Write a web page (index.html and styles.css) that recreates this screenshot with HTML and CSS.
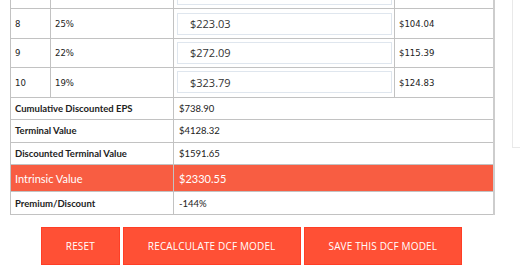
FILE: index.html
```html
<!DOCTYPE html>
<html lang="en">

<head>
    <meta charset="UTF-8">
    <meta name="viewport" content="width=device-width, initial-scale=1.0">
    <title>DCF Calculator</title>
    <link rel="stylesheet" href="styles.css">
</head>

<body>
    <div class="page">
        <main class="calc">
            <!-- Tabla de proyección (recortada arriba) -->
            <table class="dcf">
                <colgroup>
                    <col class="c-year">
                    <col class="c-growth">
                    <col class="c-eps">
                    <col class="c-disc">
                </colgroup>
                <tbody>
                    <!-- fila anterior, solo se ve el borde inferior -->
                    <tr class="year-row">
                        <td></td>
                        <td></td>
                        <td><input class="eps-input" type="text" value=""></td>
                        <td></td>
                    </tr>
                    <tr class="year-row">
                        <td>8</td>
                        <td>25%</td>
                        <td><input class="eps-input" type="text" value="$223.03"></td>
                        <td>$104.04</td>
                    </tr>
                    <tr class="year-row">
                        <td>9</td>
                        <td>22%</td>
                        <td><input class="eps-input" type="text" value="$272.09"></td>
                        <td>$115.39</td>
                    </tr>
                    <tr class="year-row">
                        <td>10</td>
                        <td>19%</td>
                        <td><input class="eps-input" type="text" value="$323.79"></td>
                        <td>$124.83</td>
                    </tr>

                    <tr class="sum-row">
                        <th colspan="2">Cumulative Discounted EPS</th>
                        <td colspan="2">$738.90</td>
                    </tr>
                    <tr class="sum-row">
                        <th colspan="2">Terminal Value</th>
                        <td colspan="2">$4128.32</td>
                    </tr>
                    <tr class="sum-row">
                        <th colspan="2">Discounted Terminal Value</th>
                        <td colspan="2">$1591.65</td>
                    </tr>
                    <tr class="sum-row intrinsic">
                        <th colspan="2">Intrinsic Value</th>
                        <td colspan="2">$2330.55</td>
                    </tr>
                    <tr class="sum-row">
                        <th colspan="2">Premium/Discount</th>
                        <td colspan="2">-144%</td>
                    </tr>
                </tbody>
            </table>

            <div class="actions">
                <button type="button" class="btn">Reset</button>
                <button type="button" class="btn">Recalculate DCF Model</button>
                <button type="button" class="btn">Save this DCF Model</button>
            </div>
        </main>

        <aside class="side"></aside>
    </div>
</body>

</html>
```

FILE: styles.css
```css
/* Estilos generales */
* {
    box-sizing: border-box;
    margin: 0;
    padding: 0;
}

body {
    background-color: #fff;
    color: #222;
    overflow: hidden;
}

.page {
    display: flex;
    align-items: flex-start;
    gap: 19px;
    padding-left: 10px;
}

.calc {
    width: 483px;
    flex-shrink: 0;
}

/* Tabla DCF */
.dcf {
    width: 100%;
    margin-top: -21px;
    border-collapse: collapse;
    table-layout: fixed;
    border-right: 2px solid #cdcdcd;
    border-bottom: 1px solid #a9a9a9;
}

.c-year { width: 40px; }
.c-growth { width: 123px; }
.c-eps { width: 221px; }
.c-disc { width: 99px; }

.dcf td, .dcf th {
    border: 1px solid #c2c2c2;
    padding: 0 4px;
    text-align: left;
    vertical-align: middle;
}

.year-row td {
    height: 29.4px;
    font-family: 'DejaVu Sans Condensed', 'DejaVu Sans', sans-serif;
    font-size: 9.5px;
    color: #222;
}

.year-row td:nth-child(3) {
    padding: 0 2px 0 3px;
}

.eps-input {
    display: block;
    width: 100%;
    height: 22px;
    padding: 0 12px;
    border: 1.5px solid #dfe6ee;
    background-color: #fff;
    font-family: 'Open Sans', sans-serif;
    font-size: 11px;
    color: #333;
    outline: none;
}

.sum-row th, .sum-row td {
    height: 22.6px;
    font-family: 'Lato', sans-serif;
    font-size: 9.5px;
    color: #222;
}

.sum-row th {
    font-weight: 700;
}

.sum-row td {
    padding-left: 5px;
}

.intrinsic th, .intrinsic td {
    height: 27px;
    background-color: #f85d42;
    color: #fff;
    font-weight: 400;
    font-size: 11px;
}

/* Botones */
.actions {
    display: flex;
    justify-content: center;
    gap: 3px;
    margin-top: 12px;
}

.btn {
    height: 38px;
    padding: 0 24px;
    background-color: #ff5035;
    border: 1px solid #ff3e26;
    color: #fff;
    font-family: 'Open Sans', sans-serif;
    font-size: 10px;
    font-weight: 500;
    letter-spacing: 0.15px;
    text-transform: uppercase;
    cursor: pointer;
}

/* Panel lateral */
.side {
    flex: 1;
    height: 158px;
    margin-top: -10px;
    border: 1px solid #e9e9e9;
    border-right: none;
    border-top: none;
}
```
